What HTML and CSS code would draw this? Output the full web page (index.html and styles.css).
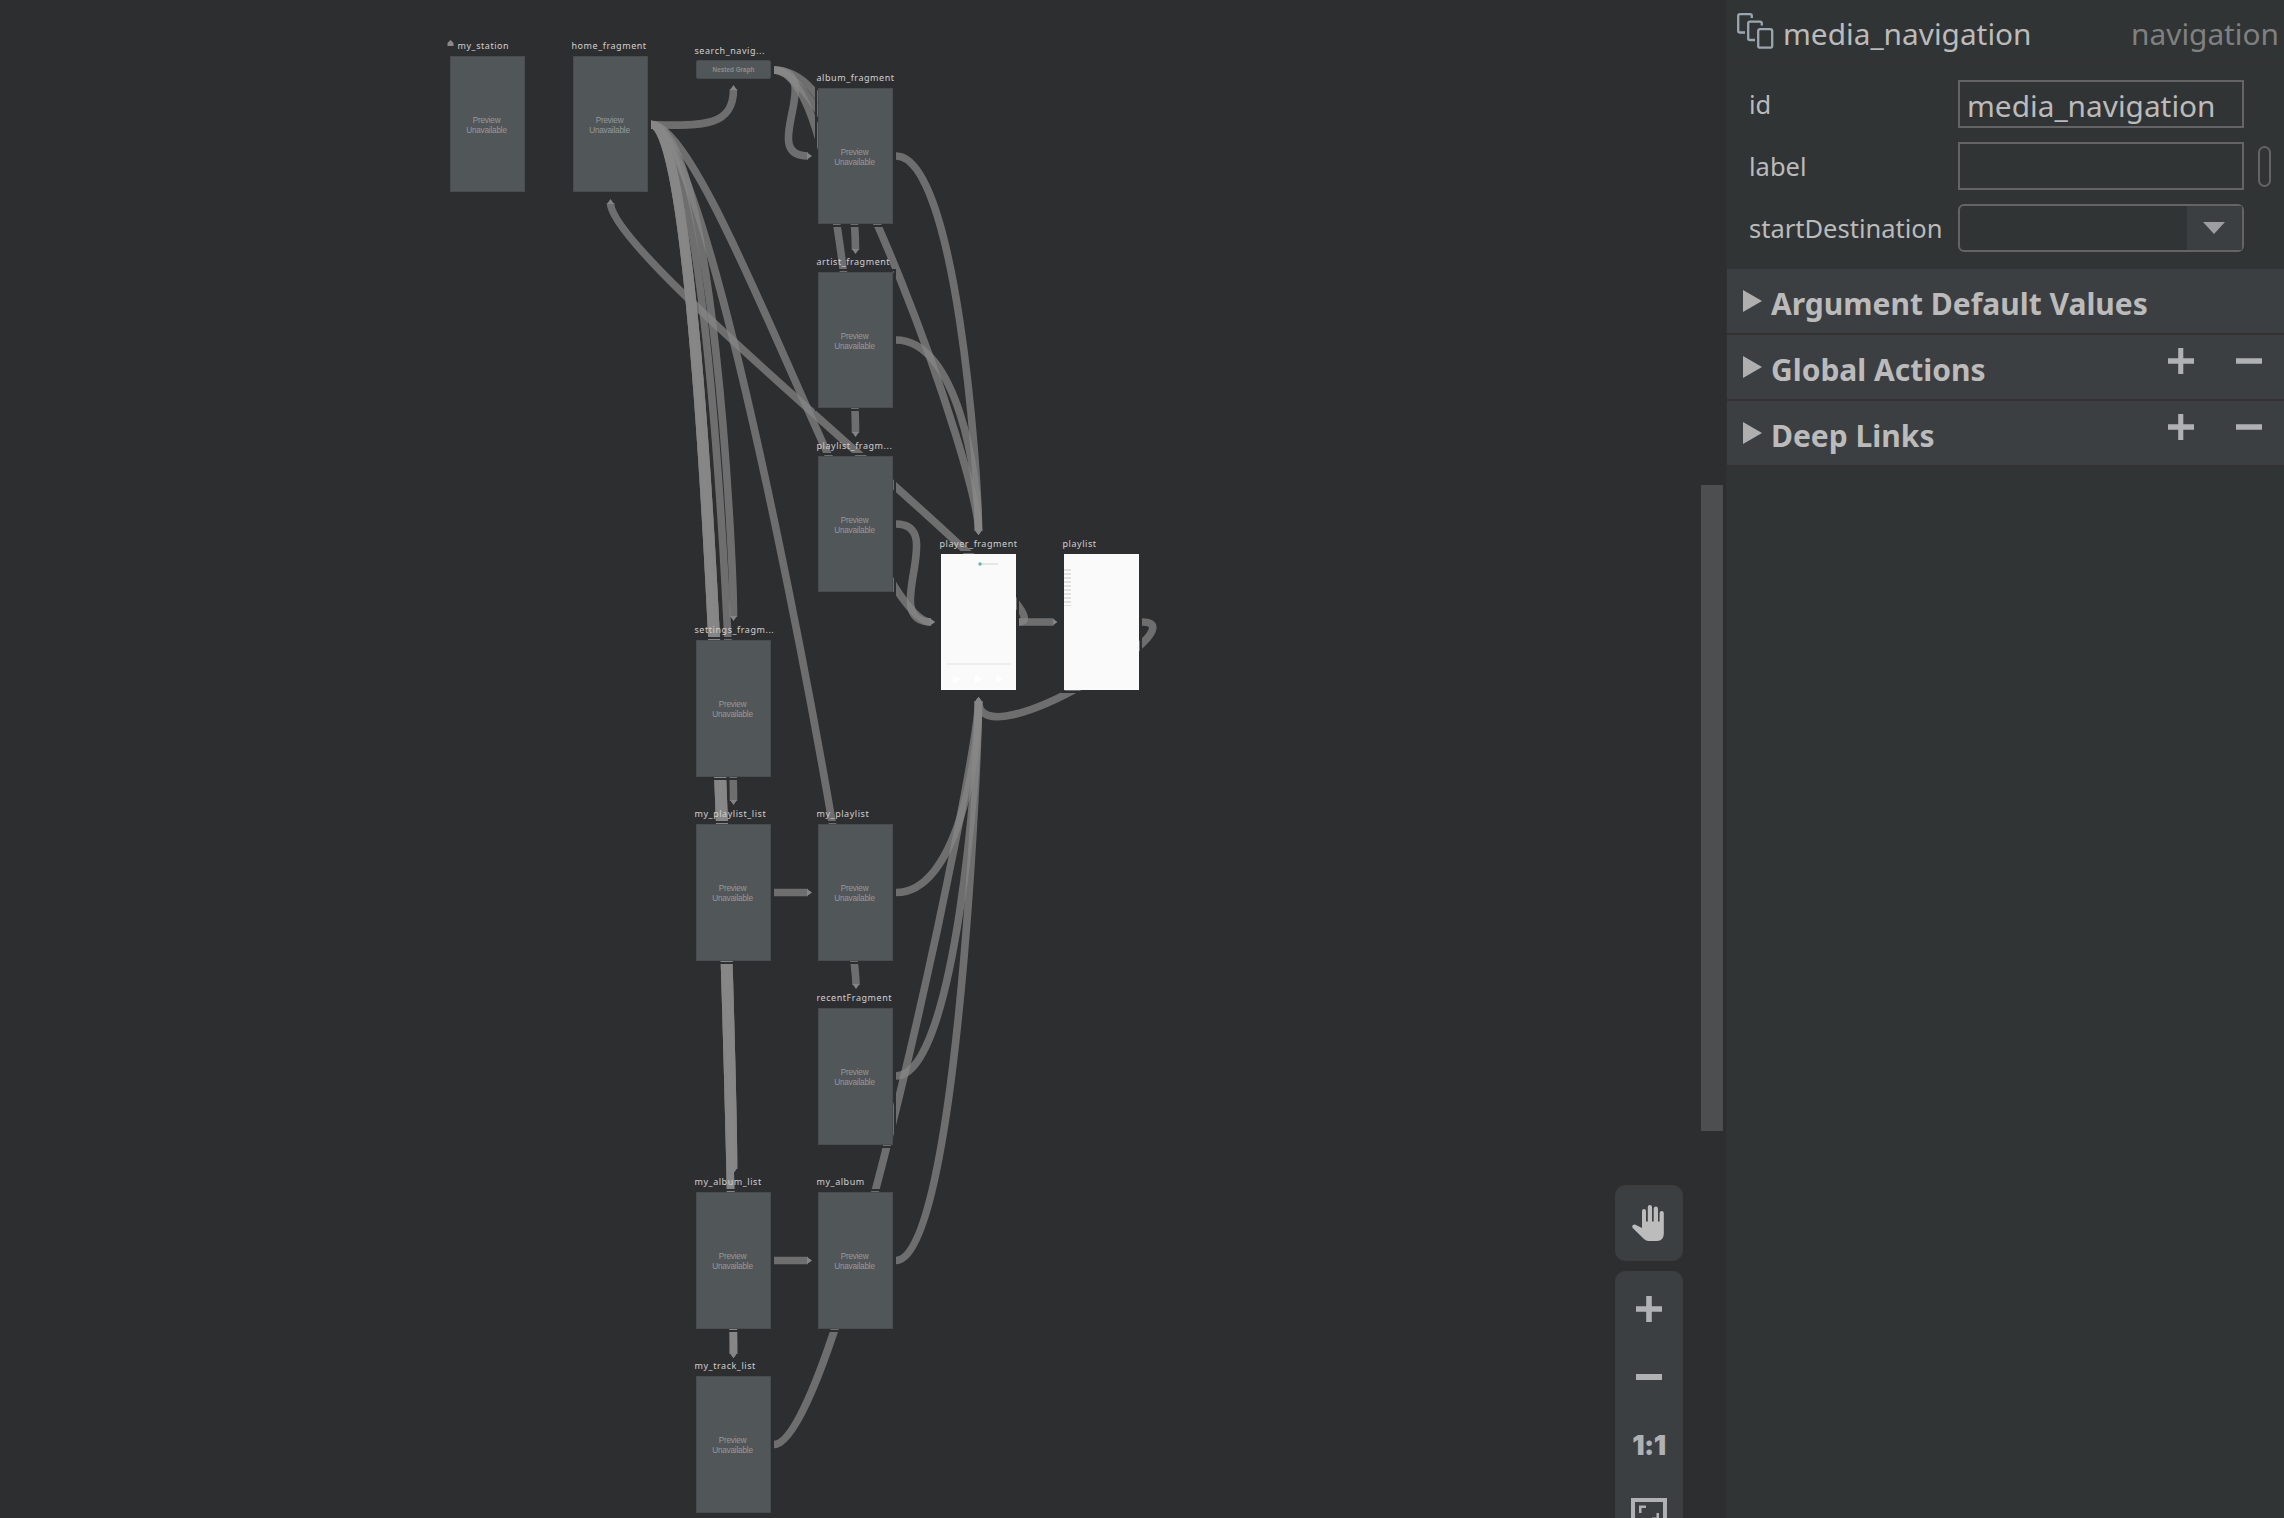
FILE: index.html
```html
<!DOCTYPE html>
<html lang="en">
<head>
<meta charset="utf-8">
<title>media_navigation</title>
<link rel="stylesheet" href="styles.css">
</head>
<body>
<div class="editor">
  <main class="canvas">
    <svg class="edges" width="1700" height="1518" viewBox="0 0 1700 1518">
      <defs>
        <marker id="arrow" markerUnits="userSpaceOnUse" markerWidth="6" markerHeight="8" refX="1" refY="4" orient="auto"><path d="M0 .5L5 4L0 7.5Z"/></marker>
      </defs>
      <g class="edge">
        <path d="M651 124.5C706 127 733.5 125 733.5 89"/>
        <path d="M651 124.5C713 124.5 733.5 557 733.5 617"/>
        <path d="M651 124.5C713 124.5 733.5 741 733.5 801"/>
        <path d="M651 124.5C713 124.5 733.5 1109 733.5 1169"/>
        <path d="M651 124.5C713 124.5 733.5 1109 733.5 1169"/>
        <path d="M651 124.5C713 124.5 733.5 1109 733.5 1169"/>
        <path d="M651 124.5C713 124.5 733.5 1294 733.5 1354"/>
        <path d="M651 124.5C713 124.5 733.5 1294 733.5 1354"/>
        <path d="M651 124.5C713 124.5 733.5 1294 733.5 1354"/>
        <path d="M651 124.5C713 124.5 856 925 856 985"/>
        <path d="M651 124.5C713 124.5 871 622 931 622"/>
        <path d="M773.3 70C828 70 757 156 808 156"/>
        <path d="M773.3 70C835 70 855.5 190 855.5 250"/>
        <path d="M773.3 70C835 70 855.5 373 855.5 433"/>
        <path d="M773.3 70C837 70 978.5 471 978.5 531"/>
        <path d="M896 156C956 156 978.5 471 978.5 531"/>
        <path d="M896 340C956 340 978.5 471 978.5 531"/>
        <path d="M896 524C948 524 879 622 931 622"/>
        <path d="M1019 622H1053.5"/>
        <path d="M1019 622C1079 622 610.5 262 610.5 203"/>
        <path d="M1142 622C1204 622 978.5 763 978.5 701"/>
        <path d="M774 892.5H808"/>
        <path d="M774 1260.5H808"/>
        <path d="M896 892.5C956 892.5 978.5 761 978.5 701"/>
        <path d="M896 1076C956 1076 978.5 761 978.5 701"/>
        <path d="M896 1260.5C956 1260.5 978.5 761 978.5 701"/>
        <path d="M774 1444.5C836 1444.5 978.5 761 978.5 701"/>
      </g>
    </svg>

    <div class="node my-station"><span class="name"><svg class="home" width="7" height="6" viewBox="0 0 7 6"><path d="M3.5 0L6.5 3V6H.5V3Z"/></svg>my_station</span><span class="preview">Preview<br>Unavailable</span></div>
    <div class="node home-fragment"><span class="name">home_fragment</span><span class="preview">Preview<br>Unavailable</span></div>
    <div class="node nested search-navigation"><span class="name">search_navig...</span><span class="graph">Nested Graph</span></div>
    <div class="node album-fragment"><span class="name">album_fragment</span><span class="preview">Preview<br>Unavailable</span></div>
    <div class="node artist-fragment"><span class="name">artist_fragment</span><span class="preview">Preview<br>Unavailable</span></div>
    <div class="node playlist-fragment"><span class="name">playlist_fragm...</span><span class="preview">Preview<br>Unavailable</span></div>
    <div class="node screen player-fragment"><span class="name">player_fragment</span>
      <svg width="75" height="136" viewBox="0 0 75 136"><path d="M39 10H57" stroke="#dfdfdf" stroke-width="1.5"/><circle cx="39" cy="10" r="1.7" fill="#62b5ac"/><path d="M6 110H70" stroke="#ededed" stroke-width="2"/><path d="M12 121V129L20 125ZM34 121V129L42 125ZM55 121V129L62 125Z" fill="#fff"/></svg></div>
    <div class="node screen playlist"><span class="name">playlist</span>
      <svg width="75" height="136" viewBox="0 0 75 136"><path d="M3.5 15V52" stroke="#e0e0e0" stroke-width="7" stroke-dasharray="2 2"/></svg></div>
    <div class="node settings-fragment"><span class="name">settings_fragm...</span><span class="preview">Preview<br>Unavailable</span></div>
    <div class="node my-playlist-list"><span class="name">my_playlist_list</span><span class="preview">Preview<br>Unavailable</span></div>
    <div class="node my-playlist"><span class="name">my_playlist</span><span class="preview">Preview<br>Unavailable</span></div>
    <div class="node recent-fragment"><span class="name">recentFragment</span><span class="preview">Preview<br>Unavailable</span></div>
    <div class="node my-album-list"><span class="name">my_album_list</span><span class="preview">Preview<br>Unavailable</span></div>
    <div class="node my-album"><span class="name">my_album</span><span class="preview">Preview<br>Unavailable</span></div>
    <div class="node my-track-list"><span class="name">my_track_list</span><span class="preview">Preview<br>Unavailable</span></div>

    <div class="tools">
      <button class="tool pan" aria-label="Pan"><svg width="32" height="36" viewBox="0 0 32 36"><path d="M10 17V6a2 2 0 0 1 4 0V16.500H15.800V2.200a2.100 2.100 0 0 1 4.200 0V16.500H21.700V3.700a2.100 2.100 0 0 1 4.300 0V16.500H27.600V8a2.100 2.100 0 0 1 4.200 0V29Q31.500 35.800 25 36H16.500Q14 36 12 34L.7 23Q-.6 20.500 2 19.600Q3.200 19.400 4.500 20.200L10 23Z"/></svg></button>
      <div class="zoom">
        <button class="tool" aria-label="Zoom in"><svg width="26" height="26" viewBox="0 0 26 26"><path d="M10.200 0H15.800V10.200H26V15.800H15.800V26H10.200V15.800H0V10.200H10.200Z"/></svg></button>
        <button class="tool" aria-label="Zoom out"><svg width="26" height="6" viewBox="0 0 26 6"><path d="M0 0H26V6H0Z"/></svg></button>
        <button class="tool ratio">1:1</button>
        <button class="tool" aria-label="Zoom to fit"><svg width="36" height="30" viewBox="0 0 36 30"><path d="M0 0H36V30H0ZM4 4V30H32V4Z" fill-rule="evenodd"/><path d="M8 7.500H15V10H10.500V15H8ZM25.500 15H28V22H21V19.500H25.500Z"/></svg></button>
      </div>
    </div>
    <div class="scrollbar"></div>
  </main>

  <aside class="attributes">
    <header class="title">
      <svg class="nav-icon" width="37" height="36" viewBox="0 0 37 36"><path d="M8 19.500H3Q1.200 19.500 1.200 18V3Q1.200 1.200 3 1.200H13Q14.800 1.200 14.800 3V5M18 27H13Q11.200 27 11.200 25.500V10.500Q11.200 8.700 13 8.700H23Q24.800 8.700 24.800 10.500V12.500"/><rect x="21.200" y="16.200" width="14" height="18.500" rx="2"/></svg>
      <span class="title-name">media_navigation</span>
      <span class="title-type">navigation</span>
    </header>
    <div class="form">
      <div class="row"><label>id</label><div class="field">media_navigation</div></div>
      <div class="row"><label>label</label><div class="field"></div><i class="pill"></i></div>
      <div class="row"><label>startDestination</label><div class="field combo"><span class="drop"><svg width="22" height="12" viewBox="0 0 22 12"><path d="M0 0H22L11 12Z"/></svg></span></div></div>
    </div>
    <section class="group"><svg class="tri" width="19" height="22" viewBox="0 0 19 22"><path d="M0 0L19 11L0 22Z"/></svg><h2>Argument Default Values</h2></section>
    <section class="group"><svg class="tri" width="19" height="22" viewBox="0 0 19 22"><path d="M0 0L19 11L0 22Z"/></svg><h2>Global Actions</h2><svg class="actions" width="94" height="26" viewBox="0 0 94 26"><path d="M10.200 0H15.300V10.300H26V15.700H15.300V26H10.200V15.700H0V10.300H10.200ZM68 10.300H94V15.700H68Z"/></svg></section>
    <section class="group"><svg class="tri" width="19" height="22" viewBox="0 0 19 22"><path d="M0 0L19 11L0 22Z"/></svg><h2>Deep Links</h2><svg class="actions" width="94" height="26" viewBox="0 0 94 26"><path d="M10.200 0H15.300V10.300H26V15.700H15.300V26H10.200V15.700H0V10.300H10.200ZM68 10.300H94V15.700H68Z"/></svg></section>
  </aside>
</div>
</body>
</html>
```
FILE: styles.css
```css
* { box-sizing: border-box; }
body { margin: 0; background: #2d2e30; color: #bbb; font-family: "Noto Sans", "Open Sans", sans-serif; }
.editor { display: flex; width: 2284px; height: 1518px; overflow: hidden; }

.canvas { position: relative; width: 1726px; height: 1518px; overflow: hidden; background: #2d2e30; }
.edges { position: absolute; left: 0; top: 0; }
.edge path { fill: none; stroke: #888; stroke-opacity: .72; stroke-width: 7.6; marker-end: url(#arrow); }
#arrow path { fill: #858585; stroke: none; }

.node { position: absolute; width: 75px; height: 136px; background: #515658; border: 1px solid #484c4e; outline: 2px solid #2d2e30; outline-offset: 1px; }
.name { position: absolute; left: -2.500px; top: -17.500px; font-size: 9px; line-height: 12px; letter-spacing: .55px; white-space: nowrap; color: #d0d0d0; }
.preview { position: absolute; left: -1px; right: 1px; top: 59px; font: 8.200px/10px "Liberation Sans", sans-serif; letter-spacing: -.2px; text-align: center; color: #999; }
.nested { height: 19px; border-radius: 2px; }
.nested .name { top: -16px; }
.graph { display: block; font: bold 6.400px/18px "Liberation Sans", sans-serif; text-align: center; color: #8b8d8d; }
.screen { background: #fafafa; border: 0; }
.screen .name { left: -1.500px; top: -16.500px; }
.screen svg { display: block; }
.home { position: absolute; left: -11px; top: 0; fill: #8a8a8a; }
.my-station { left: 450px; top: 56px; }
.my-station .name { left: 6.500px; }
.home-fragment { left: 573px; top: 56px; }
.search-navigation { left: 696px; top: 60px; }
.album-fragment { left: 818px; top: 88px; }
.artist-fragment { left: 818px; top: 272px; }
.playlist-fragment { left: 818px; top: 456px; }
.player-fragment { left: 941px; top: 554px; }
.playlist { left: 1064px; top: 554px; }
.settings-fragment { left: 696px; top: 640px; height: 137px; }
.my-playlist-list { left: 696px; top: 824px; height: 137px; }
.my-playlist { left: 818px; top: 824px; height: 137px; }
.recent-fragment { left: 818px; top: 1008px; height: 137px; }
.my-album-list { left: 696px; top: 1192px; height: 137px; }
.my-album { left: 818px; top: 1192px; height: 137px; }
.my-track-list { left: 696px; top: 1376px; height: 137px; }

.tools { position: absolute; left: 1615px; top: 1185px; width: 68px; display: flex; flex-direction: column; gap: 10px; }
.tool { display: flex; align-items: center; justify-content: center; width: 100%; height: 68px; padding: 0; border: 0; background: none; color: #afb1b3; font-family: inherit; }
.tool svg { fill: #afb1b3; }
.pan, .zoom { background: #3c3f41; border: 1px solid #3d3d3e; border-radius: 10px; }
.pan { height: 76px; padding-right: 3px; }
.pan svg { fill: #bcbcbc; }
.zoom { height: 300px; padding-top: 3px; }
.ratio { font: 900 27.500px/68px Inter, sans-serif; letter-spacing: -.5px; }
.scrollbar { position: absolute; left: 1701px; top: 485px; width: 22px; height: 646px; background: #4d4e50; }

.attributes { flex: 1; background: #313435; border-left: 1px solid #303132; }
.title { display: flex; height: 63px; padding: 13px 5px 0 10px; border-bottom: 1px solid #333132; font-size: 29.800px; line-height: 41px; white-space: nowrap; }
.nav-icon { margin-right: 9px; fill: none; stroke: #9aa7b0; stroke-width: 2.300; }
.title-type { margin-left: auto; color: #808080; }
.form { display: flex; flex-direction: column; gap: 14px; padding: 17px 0 17px 22px; }
.row { display: flex; align-items: center; height: 48px; }
.row label { width: 209px; font-size: 25.500px; line-height: 48px; }
.field { width: 286px; height: 48px; padding: 3px 0 0 7px; border: 2px solid #646464; font-size: 29.800px; line-height: 41px; }
.pill { width: 13px; height: 41px; margin-left: 14px; border: 2px solid #646464; border-radius: 7px; }
.combo { display: flex; justify-content: flex-end; padding: 0; border-radius: 6px; }
.drop { display: flex; align-items: center; justify-content: center; width: 55px; padding-right: 2px; background: #3c3f41; }
.drop svg { fill: #9c9ea0; }
.group { display: flex; align-items: flex-start; height: 64px; margin-bottom: 2px; padding: 21px 22px 0 16px; background: #3c3f41; box-shadow: 0 2px #333132; }
.tri { fill: #afafaf; }
.group h2 { margin: -8px 0 0 9px; font-size: 30px; line-height: 44px; font-weight: 700; white-space: nowrap; }
.actions { margin: -8px 0 0 auto; fill: #afb1b3; }
```
